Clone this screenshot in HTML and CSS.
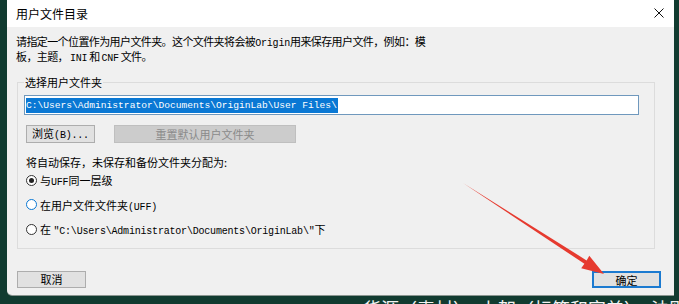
FILE: index.html
```html
<!DOCTYPE html>
<html lang="zh-CN">
<head>
    <meta charset="UTF-8">
    <title>用户文件目录</title>
    <link rel="stylesheet" href="styles.css">
</head>
<body>

<div class="dialog">
    <div class="titlebar">
        <span class="title">用户文件目录</span>
        <svg class="close" width="10" height="10" viewBox="0 0 10 10">
            <path d="M0.5 0.5 L9.5 9.5 M9.5 0.5 L0.5 9.5" stroke="#111" stroke-width="1" fill="none"/>
        </svg>
    </div>

    <div class="content">
        <p class="desc">请指定一个位置作为用户文件夹。这个文件夹将会被<span class="mono">Origin</span>用来保存用户文件，例如：模<br>板，主题，&nbsp;<span class="mono">INI</span>&nbsp;和&nbsp;<span class="mono">CNF</span>&nbsp;文件。</p>

        <fieldset class="group">
            <legend>选择用户文件夹</legend>
            <div class="path-box">
                <span class="path-sel">C:\Users\Administrator\Documents\OriginLab\User Files\</span>
            </div>
            <div class="button-row">
                <button class="button browse">浏览<span class="mono">(B)...</span></button>
                <button class="button reset" disabled>重置默认用户文件夹</button>
            </div>
            <p class="label">将自动保存，未保存和备份文件夹分配为:</p>
            <div class="radio-row"><span class="radio checked"></span><span>与<span class="mono">UFF</span>同一层级</span></div>
            <div class="radio-row"><span class="radio focus"></span><span>在用户文件文件夹<span class="mono">(UFF)</span></span></div>
            <div class="radio-row"><span class="radio"></span><span>在 <span class="mono">"C:\Users\Administrator\Documents\OriginLab\"</span>下</span></div>
        </fieldset>
    </div>

    <div class="footer">
        <button class="button cancel">取消</button>
        <button class="button ok">确定</button>
    </div>
</div>

<div class="under">货源（素材）、上架（标签和审美）、法则</div>

<svg class="arrow" width="679" height="304" viewBox="0 0 679 304">
    <polygon points="463,183 586.6,260.4 589.3,255.8 604,274 581.2,268.2 584.4,263.8" fill="#e63a2f"/>
</svg>

</body>
</html>
```

FILE: styles.css
```css
body {
    margin: 0;
    width: 679px;
    height: 304px;
    overflow: hidden;
    background: #113b30;
    padding-left: 7px;
    box-sizing: border-box;
    font-family: "Noto Sans CJK SC", sans-serif;
    font-size: 11px;
    color: #000;
    position: relative;
}
.dialog {
    width: 667px;
    height: 295px;
    background: #f0f0f0;
    border-bottom-left-radius: 5px;
    box-shadow: 0 1px 0 #8a9590;
    display: flex;
    flex-direction: column;
}
.titlebar {
    height: 27px;
    background: #fff;
    display: flex;
    align-items: center;
    justify-content: space-between;
    padding: 0 10px 0 9px;
    box-sizing: border-box;
}
.title {
    font-size: 12px;
    margin-top: -1px;
}
.close {
    margin-top: -2px;
}
.content {
    padding: 0 19px 0 9px;
}
.mono {
    font-family: "Liberation Mono", monospace;
    font-size: 10px;
    letter-spacing: -0.2px;
}
p {
    margin: 0;
}
.desc {
    line-height: 12px;
    margin-top: 8px;
    letter-spacing: -0.6px;
}
.group {
    margin: 11px 0 0 1px;
    padding: 0 15px 6px 6px;
    border: 1px solid #dcdcdc;
}
.group legend {
    padding: 0 1px;
    margin-left: 0;
    font-size: 11px;
    line-height: 12px;
}
.path-box {
    margin-top: 7px;
    height: 20px;
    border: 1px solid #6f98bd;
    background: #fff;
    display: flex;
    align-items: center;
    padding-left: 1px;
    box-sizing: border-box;
}
.path-sel {
    background: #0a78d4;
    color: #fff;
    font-family: "Liberation Mono", monospace;
    font-size: 9.6px;
    line-height: 15px;
    padding-right: 1px;
}
.button-row {
    display: flex;
    gap: 19px;
    margin: 10px 0 0 2px;
}
.button {
    height: 18px;
    padding: 0;
    border: 1px solid #adadad;
    background: #e1e1e1;
    font-family: "Noto Sans CJK SC", sans-serif;
    font-size: 11px;
    color: #000;
    line-height: 14px;
}
.browse {
    width: 69px;
}
.reset {
    width: 182px;
    background: #cccccc;
    border-color: #bfbfbf;
    color: #8a8a8a;
}
.label {
    margin: 13px 0 0 2px;
    line-height: 12px;
}
.radio-row {
    display: flex;
    align-items: center;
    height: 24.5px;
    margin-left: 2px;
}
.radio-row:first-of-type {
    margin-top: 5px;
}
.radio {
    width: 11px;
    height: 11px;
    border: 1px solid #333;
    border-radius: 50%;
    box-sizing: border-box;
    background: #fff;
    margin-right: 3px;
    display: flex;
    align-items: center;
    justify-content: center;
}
.radio.checked::after {
    content: "";
    width: 5px;
    height: 5px;
    border-radius: 50%;
    background: #222;
}
.radio.focus {
    border-color: #0a78d4;
}
.footer {
    display: flex;
    justify-content: space-between;
    padding: 22px 13px 0 10px;
}
.cancel, .ok {
    width: 69px;
    height: 17px;
}
.ok {
    border: 2px solid #1b7ad0;
}
.under {
    margin: 4px 0 0 356px;
    height: 9px;
    overflow: hidden;
    color: #f2f2f2;
    font-size: 18px;
    line-height: 18px;
    white-space: nowrap;
}
.arrow {
    position: absolute;
    left: 0;
    top: 0;
}
```
